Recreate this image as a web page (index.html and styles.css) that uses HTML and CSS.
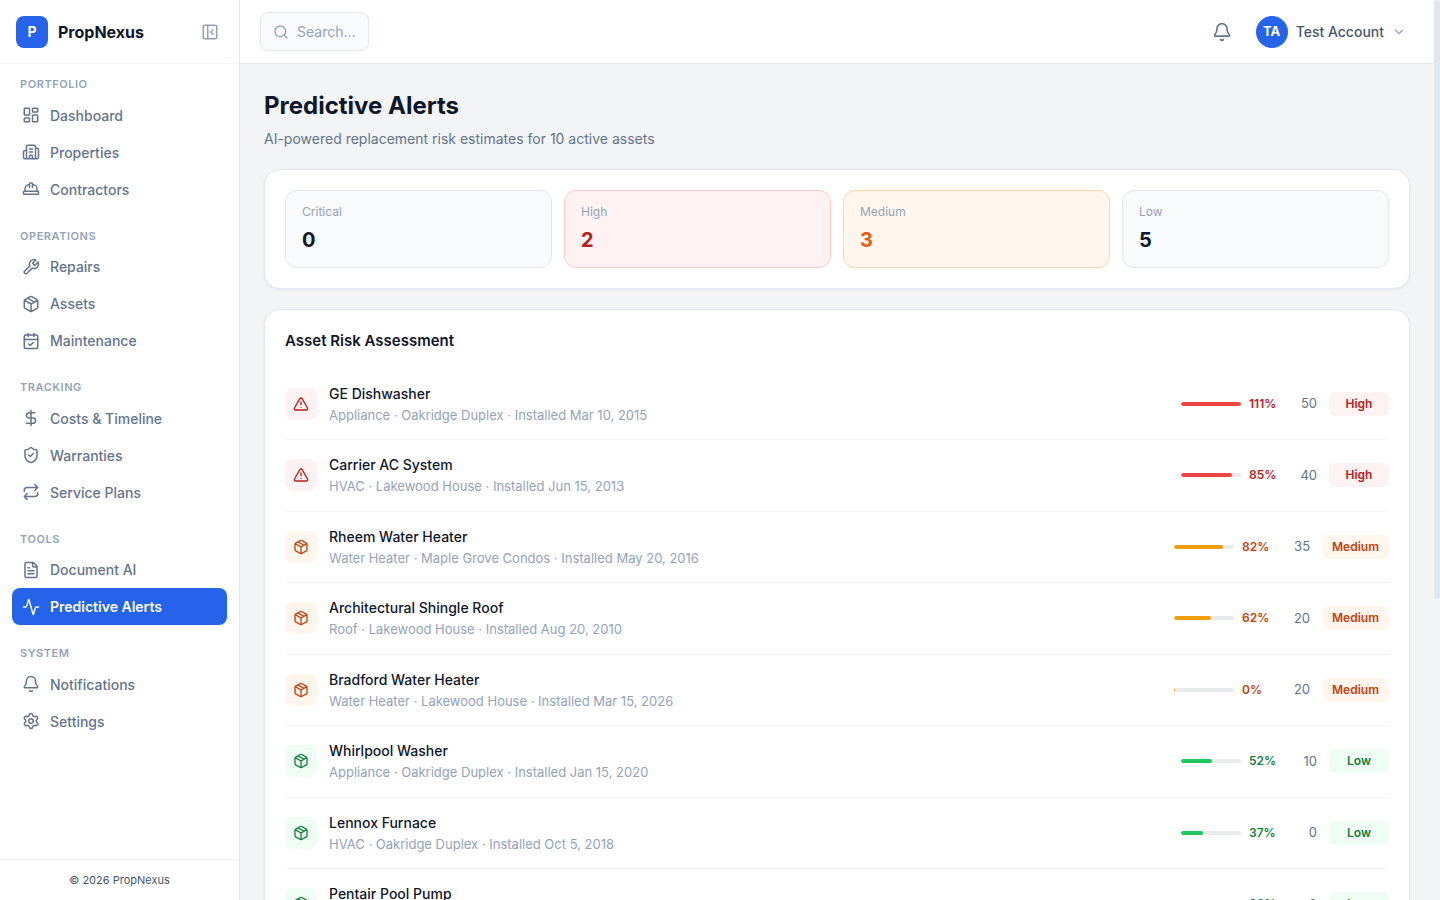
FILE: index.html
```html
<!DOCTYPE html>
<html lang="en">
<head>
<meta charset="utf-8">
<title>Predictive Alerts - PropNexus</title>
<link rel="stylesheet" href="styles.css">
</head>
<body>
<svg class="sprite" aria-hidden="true">
  <symbol id="i-collapse" viewBox="0 0 24 24"><rect width="18" height="18" x="3" y="3" rx="2"/><path d="M9 3v18M16 15l-3-3 3-3"/></symbol>
  <symbol id="i-dashboard" viewBox="0 0 24 24"><rect width="7" height="9" x="3" y="3" rx="1"/><rect width="7" height="5" x="14" y="3" rx="1"/><rect width="7" height="9" x="14" y="12" rx="1"/><rect width="7" height="5" x="3" y="16" rx="1"/></symbol>
  <symbol id="i-building" viewBox="0 0 24 24"><path d="M10 12h4M10 8h4M14 21v-3a2 2 0 0 0-4 0v3M6 10H4a2 2 0 0 0-2 2v7a2 2 0 0 0 2 2h16a2 2 0 0 0 2-2V9a2 2 0 0 0-2-2h-2M6 21V5a2 2 0 0 1 2-2h8a2 2 0 0 1 2 2v16"/></symbol>
  <symbol id="i-hat" viewBox="0 0 24 24"><path d="M10 10V5a1 1 0 0 1 1-1h2a1 1 0 0 1 1 1v5M14 6a6 6 0 0 1 6 6v3M4 15v-3a6 6 0 0 1 6-6"/><rect x="2" y="15" width="20" height="4" rx="1"/></symbol>
  <symbol id="i-wrench" viewBox="0 0 24 24"><path d="M14.7 6.3a1 1 0 0 0 0 1.4l1.6 1.6a1 1 0 0 0 1.4 0l3.77-3.77a6 6 0 0 1-7.94 7.94l-6.91 6.91a2.12 2.12 0 0 1-3-3l6.91-6.91a6 6 0 0 1 7.94-7.94l-3.76 3.76z"/></symbol>
  <symbol id="i-package" viewBox="0 0 24 24"><path d="M11 21.73a2 2 0 0 0 2 0l7-4A2 2 0 0 0 21 16V8a2 2 0 0 0-1-1.73l-7-4a2 2 0 0 0-2 0l-7 4A2 2 0 0 0 3 8v8a2 2 0 0 0 1 1.73zM12 22V12M3.29 7 12 12l8.71-5M7.5 4.27l9 5.15"/></symbol>
  <symbol id="i-calendar" viewBox="0 0 24 24"><path d="M8 2v4M16 2v4M3 10h18M9 16l2 2 4-4"/><rect width="18" height="18" x="3" y="4" rx="2"/></symbol>
  <symbol id="i-dollar" viewBox="0 0 24 24"><path d="M12 2v20M17 5H9.500a3.500 3.500 0 0 0 0 7h5a3.500 3.500 0 0 1 0 7H6"/></symbol>
  <symbol id="i-shield" viewBox="0 0 24 24"><path d="M20 13c0 5-3.500 7.500-7.660 8.950a1 1 0 0 1-.67-.01C7.500 20.500 4 18 4 13V6a1 1 0 0 1 1-1c2 0 4.500-1.200 6.240-2.720a1.170 1.170 0 0 1 1.520 0C14.510 3.810 17 5 19 5a1 1 0 0 1 1 1zM9 12l2 2 4-4"/></symbol>
  <symbol id="i-repeat" viewBox="0 0 24 24"><path d="m17 2 4 4-4 4M3 11v-1a4 4 0 0 1 4-4h14M7 22l-4-4 4-4M21 13v1a4 4 0 0 1-4 4H3"/></symbol>
  <symbol id="i-file" viewBox="0 0 24 24"><path d="M15 2H6a2 2 0 0 0-2 2v16a2 2 0 0 0 2 2h12a2 2 0 0 0 2-2V7zM14 2v4a2 2 0 0 0 2 2h4M10 9H8M16 13H8M16 17H8"/></symbol>
  <symbol id="i-activity" viewBox="0 0 24 24"><path d="M22 12h-2.480a2 2 0 0 0-1.930 1.460l-2.350 8.360a.25.25 0 0 1-.48 0L9.240 2.180a.25.25 0 0 0-.48 0l-2.350 8.360A2 2 0 0 1 4.490 12H2"/></symbol>
  <symbol id="i-bell" viewBox="0 0 24 24"><path d="M10.268 21a2 2 0 0 0 3.464 0M3.262 15.326A1 1 0 0 0 4 17h16a1 1 0 0 0 .74-1.673C19.410 13.956 18 12.499 18 8A6 6 0 0 0 6 8c0 4.499-1.411 5.956-2.738 7.326"/></symbol>
  <symbol id="i-gear" viewBox="0 0 24 24"><path d="M9.671 4.136a2.340 2.340 0 0 1 4.659 0 2.340 2.340 0 0 0 3.319 1.915 2.340 2.340 0 0 1 2.330 4.033 2.340 2.340 0 0 0 0 3.831 2.340 2.340 0 0 1-2.330 4.033 2.340 2.340 0 0 0-3.319 1.915 2.340 2.340 0 0 1-4.659 0 2.340 2.340 0 0 0-3.320-1.915 2.340 2.340 0 0 1-2.330-4.033 2.340 2.340 0 0 0 0-3.831A2.340 2.340 0 0 1 6.350 6.051a2.340 2.340 0 0 0 3.319-1.915"/><circle cx="12" cy="12" r="3"/></symbol>
  <symbol id="i-search" viewBox="0 0 24 24"><circle cx="11" cy="11" r="8"/><path d="m21 21-4.340-4.340"/></symbol>
  <symbol id="i-chevron" viewBox="0 0 24 24"><path d="m6 9 6 6 6-6"/></symbol>
  <symbol id="i-alert" viewBox="0 0 24 24"><path d="m21.730 18-8-14a2 2 0 0 0-3.480 0l-8 14A2 2 0 0 0 4 21h16a2 2 0 0 0 1.730-3M12 9v4M12 17h.01"/></symbol>
</svg>
<div class="app">
  <aside class="sidebar">
    <div class="brand">
      <span class="brand-mark">P</span>
      <span class="brand-name">PropNexus</span>
      <button class="icon-button collapse" type="button" aria-label="Collapse sidebar"><svg class="icon"><use href="#i-collapse"/></svg></button>
    </div>
    <nav class="nav" aria-label="Main">
      <section class="nav-group">
        <h2 class="nav-title">Portfolio</h2>
        <a class="nav-link" href="#"><svg class="icon"><use href="#i-dashboard"/></svg>Dashboard</a>
        <a class="nav-link" href="#"><svg class="icon"><use href="#i-building"/></svg>Properties</a>
        <a class="nav-link" href="#"><svg class="icon"><use href="#i-hat"/></svg>Contractors</a>
      </section>
      <section class="nav-group">
        <h2 class="nav-title">Operations</h2>
        <a class="nav-link" href="#"><svg class="icon"><use href="#i-wrench"/></svg>Repairs</a>
        <a class="nav-link" href="#"><svg class="icon"><use href="#i-package"/></svg>Assets</a>
        <a class="nav-link" href="#"><svg class="icon"><use href="#i-calendar"/></svg>Maintenance</a>
      </section>
      <section class="nav-group">
        <h2 class="nav-title">Tracking</h2>
        <a class="nav-link" href="#"><svg class="icon"><use href="#i-dollar"/></svg>Costs &amp; Timeline</a>
        <a class="nav-link" href="#"><svg class="icon"><use href="#i-shield"/></svg>Warranties</a>
        <a class="nav-link" href="#"><svg class="icon"><use href="#i-repeat"/></svg>Service Plans</a>
      </section>
      <section class="nav-group">
        <h2 class="nav-title">Tools</h2>
        <a class="nav-link" href="#"><svg class="icon"><use href="#i-file"/></svg>Document AI</a>
        <a class="nav-link active" href="#" aria-current="page"><svg class="icon"><use href="#i-activity"/></svg>Predictive Alerts</a>
      </section>
      <section class="nav-group">
        <h2 class="nav-title">System</h2>
        <a class="nav-link" href="#"><svg class="icon"><use href="#i-bell"/></svg>Notifications</a>
        <a class="nav-link" href="#"><svg class="icon"><use href="#i-gear"/></svg>Settings</a>
      </section>
    </nav>
    <footer class="sidebar-footer">© 2026 PropNexus</footer>
  </aside>
  <div class="page">
    <header class="topbar">
      <button class="search" type="button"><svg class="icon"><use href="#i-search"/></svg>Search...</button>
      <div class="topbar-actions">
        <button class="icon-button bell" type="button" aria-label="Notifications"><svg class="icon"><use href="#i-bell"/></svg></button>
        <button class="account" type="button"><span class="avatar">TA</span><span>Test Account</span><svg class="icon"><use href="#i-chevron"/></svg></button>
      </div>
    </header>
    <main class="content">
      <div class="heading">
        <h1 class="title">Predictive Alerts</h1>
        <p class="subtitle">AI-powered replacement risk estimates for 10 active assets</p>
      </div>
      <section class="card stats" aria-label="Risk summary">
        <div class="stat"><span class="stat-label">Critical</span><span class="stat-value">0</span></div>
        <div class="stat stat-high"><span class="stat-label">High</span><span class="stat-value">2</span></div>
        <div class="stat stat-medium"><span class="stat-label">Medium</span><span class="stat-value">3</span></div>
        <div class="stat"><span class="stat-label">Low</span><span class="stat-value">5</span></div>
      </section>
      <section class="card">
        <h2 class="card-title">Asset Risk Assessment</h2>
        <ul class="assets">
          <li class="asset high">
            <span class="asset-icon"><svg class="icon"><use href="#i-alert"/></svg></span>
            <div class="asset-info"><p class="asset-name">GE Dishwasher</p><p class="asset-meta">Appliance · Oakridge Duplex · Installed Mar 10, 2015</p></div>
            <span class="bar"><span class="fill" style="width:100%"></span></span><span class="percent">111%</span><span class="score">50</span><span class="badge">High</span>
          </li>
          <li class="asset high">
            <span class="asset-icon"><svg class="icon"><use href="#i-alert"/></svg></span>
            <div class="asset-info"><p class="asset-name">Carrier AC System</p><p class="asset-meta">HVAC · Lakewood House · Installed Jun 15, 2013</p></div>
            <span class="bar"><span class="fill" style="width:85%"></span></span><span class="percent">85%</span><span class="score">40</span><span class="badge">High</span>
          </li>
          <li class="asset medium">
            <span class="asset-icon"><svg class="icon"><use href="#i-package"/></svg></span>
            <div class="asset-info"><p class="asset-name">Rheem Water Heater</p><p class="asset-meta">Water Heater · Maple Grove Condos · Installed May 20, 2016</p></div>
            <span class="bar"><span class="fill" style="width:82%"></span></span><span class="percent">82%</span><span class="score">35</span><span class="badge">Medium</span>
          </li>
          <li class="asset medium">
            <span class="asset-icon"><svg class="icon"><use href="#i-package"/></svg></span>
            <div class="asset-info"><p class="asset-name">Architectural Shingle Roof</p><p class="asset-meta">Roof · Lakewood House · Installed Aug 20, 2010</p></div>
            <span class="bar"><span class="fill" style="width:62%"></span></span><span class="percent">62%</span><span class="score">20</span><span class="badge">Medium</span>
          </li>
          <li class="asset medium">
            <span class="asset-icon"><svg class="icon"><use href="#i-package"/></svg></span>
            <div class="asset-info"><p class="asset-name">Bradford Water Heater</p><p class="asset-meta">Water Heater · Lakewood House · Installed Mar 15, 2026</p></div>
            <span class="bar"><span class="fill" style="width:1%"></span></span><span class="percent">0%</span><span class="score">20</span><span class="badge">Medium</span>
          </li>
          <li class="asset low">
            <span class="asset-icon"><svg class="icon"><use href="#i-package"/></svg></span>
            <div class="asset-info"><p class="asset-name">Whirlpool Washer</p><p class="asset-meta">Appliance · Oakridge Duplex · Installed Jan 15, 2020</p></div>
            <span class="bar"><span class="fill" style="width:52%"></span></span><span class="percent">52%</span><span class="score">10</span><span class="badge">Low</span>
          </li>
          <li class="asset low">
            <span class="asset-icon"><svg class="icon"><use href="#i-package"/></svg></span>
            <div class="asset-info"><p class="asset-name">Lennox Furnace</p><p class="asset-meta">HVAC · Oakridge Duplex · Installed Oct 5, 2018</p></div>
            <span class="bar"><span class="fill" style="width:37%"></span></span><span class="percent">37%</span><span class="score">0</span><span class="badge">Low</span>
          </li>
          <li class="asset low">
            <span class="asset-icon"><svg class="icon"><use href="#i-package"/></svg></span>
            <div class="asset-info"><p class="asset-name">Pentair Pool Pump</p><p class="asset-meta">Pool</p></div>
            <span class="bar"><span class="fill" style="width:33%"></span></span><span class="percent">33%</span><span class="score">0</span><span class="badge">Low</span>
          </li>
        </ul>
      </section>
    </main>
  </div>
  <div class="scroll-track" aria-hidden="true"><div class="scroll-thumb"></div></div>
</div>
</body>
</html>
```
FILE: styles.css
```css
*, *::before, *::after { box-sizing: border-box; }

body, h1, h2, p, ul { margin: 0; padding: 0; }

body {
  font-family: Inter, "Liberation Sans", sans-serif;
  font-size: 14px;
  line-height: 1.5;
  color: #0f172a;
  background: #f3f4f6;
}

button {
  font: inherit;
  color: inherit;
  background: none;
  border: 0;
  padding: 0;
  cursor: pointer;
}

a { color: inherit; text-decoration: none; }

.sprite { display: none; }

.icon {
  width: 18px;
  height: 18px;
  flex: none;
  display: block;
  fill: none;
  stroke: currentColor;
  stroke-width: 2;
  stroke-linecap: round;
  stroke-linejoin: round;
}

.app { display: flex; height: 100vh; }

/* Sidebar */
.sidebar {
  width: 240px;
  flex: none;
  display: flex;
  flex-direction: column;
  background: #fff;
  border-right: 1px solid #e2e8f0;
}

.brand {
  display: flex;
  align-items: center;
  gap: 10px;
  height: 64px;
  flex: none;
  padding: 0 16px;
  border-bottom: 1px solid #f1f5f9;
}

.brand-mark {
  display: grid;
  place-items: center;
  width: 32px;
  height: 32px;
  border-radius: 8px;
  background: #2563eb;
  color: #fff;
  font-weight: 700;
}

.brand-name { flex: 1; font-size: 16px; font-weight: 700; }

.icon-button { display: grid; place-items: center; color: #64748b; }
.collapse { width: 26px; height: 26px; color: #94a3b8; }

.nav {
  flex: 1;
  min-height: 0;
  overflow: hidden;
  display: flex;
  flex-direction: column;
  gap: 20px;
  padding: 12px;
}

.nav-title {
  padding: 0 8px;
  margin-bottom: 4px;
  font-size: 11px;
  font-weight: 600;
  letter-spacing: 0.05em;
  text-transform: uppercase;
  color: #94a3b8;
}

.nav-link {
  display: flex;
  align-items: center;
  gap: 10px;
  padding: 8px 10px;
  border-radius: 8px;
  font-weight: 500;
  color: #64748b;
}

.nav-link.active { background: #2563eb; color: #fff; font-weight: 600; }

.sidebar-footer {
  padding: 12px;
  border-top: 1px solid #f1f5f9;
  text-align: center;
  font-size: 11px;
  color: #475569;
}

/* Page */
.page { flex: 1; min-width: 0; overflow-y: auto; scrollbar-width: none; }

.scroll-track { width: 6px; flex: none; }
.scroll-thumb { height: 66.5%; border-radius: 3px; background: #e2e8f0; }

.topbar {
  position: sticky;
  top: 0;
  z-index: 1;
  display: flex;
  align-items: center;
  justify-content: space-between;
  height: 64px;
  padding: 0 24px 0 20px;
  background: #fff;
  border-bottom: 1px solid #e2e8f0;
}

.search {
  display: flex;
  align-items: center;
  gap: 8px;
  padding: 8px 12px;
  border: 1px solid #e2e8f0;
  border-radius: 8px;
  background: #f8fafc;
  color: #94a3b8;
}

.search .icon { width: 16px; height: 16px; }

.topbar-actions { display: flex; align-items: center; gap: 12px; }
.bell { width: 36px; height: 36px; }
.bell .icon { width: 20px; height: 20px; }

.account {
  display: flex;
  align-items: center;
  gap: 8px;
  padding: 0 4px;
  font-weight: 500;
  color: #475569;
}

.account .icon { width: 14px; height: 14px; color: #94a3b8; }

.avatar {
  display: grid;
  place-items: center;
  width: 32px;
  height: 32px;
  border-radius: 50%;
  background: #2563eb;
  color: #fff;
  font-size: 13px;
  font-weight: 700;
}

.content {
  display: flex;
  flex-direction: column;
  gap: 20px;
  padding: 24px 24px 392px;
}

.title { font-size: 24px; font-weight: 700; }
.subtitle { margin-top: 4px; color: #64748b; }

.card {
  padding: 20px;
  border: 1px solid #e2e8f0;
  border-radius: 16px;
  background: #fff;
  box-shadow: 0 1px 3px rgba(15, 23, 42, 0.06);
}

.stats { display: grid; grid-template-columns: repeat(4, 1fr); gap: 12px; }

.stat {
  display: flex;
  flex-direction: column;
  padding: 12px 16px;
  border: 1px solid #e2e8f0;
  border-radius: 12px;
  background: #f8fafc;
}

.stat-label { font-size: 12px; color: #94a3b8; }
.stat-value { margin-top: 4px; font-size: 20px; font-weight: 700; }
.stat-high { background: #fef2f2; border-color: #fecaca; }
.stat-high .stat-value { color: #b91c1c; }
.stat-medium { background: #fff7ed; border-color: #fed7aa; }
.stat-medium .stat-value { color: #ea580c; }

.card-title { margin-bottom: 16px; font-size: 15px; font-weight: 600; }

.assets { list-style: none; }

.asset {
  display: flex;
  align-items: center;
  padding: 14px 0;
  border-bottom: 1px solid #f1f5f9;
}

.asset-icon {
  display: grid;
  place-items: center;
  width: 32px;
  height: 32px;
  margin-right: 12px;
  border-radius: 8px;
  background: var(--tint);
  color: var(--ink);
}

.asset-icon .icon { width: 16px; height: 16px; }
.asset-info { flex: 1; min-width: 0; }
.asset-name { font-weight: 500; }
.asset-meta { margin-top: 2px; font-size: 13px; color: #94a3b8; }

.high { --tint: #fef2f2; --ink: #b91c1c; --fill: #ef4444; }
.medium { --tint: #fff7ed; --ink: #c2410c; --fill: #f59e0b; }
.low { --tint: #f0fdf4; --ink: #15803d; --fill: #22c55e; }

.bar {
  width: 60px;
  height: 4px;
  border-radius: 2px;
  overflow: hidden;
  background: #e9eaec;
}

.fill { display: block; height: 100%; border-radius: 2px; background: var(--fill); }

.percent {
  width: 36px;
  margin-left: 8px;
  font-size: 12px;
  font-weight: 600;
  color: var(--ink);
}

.score {
  width: 32px;
  text-align: right;
  font-size: 13px;
  color: #64748b;
}

.badge {
  min-width: 60px;
  margin-left: 12px;
  padding: 3px 10px;
  border-radius: 6px;
  background: var(--tint);
  color: var(--ink);
  font-size: 12px;
  font-weight: 600;
  text-align: center;
}
```
